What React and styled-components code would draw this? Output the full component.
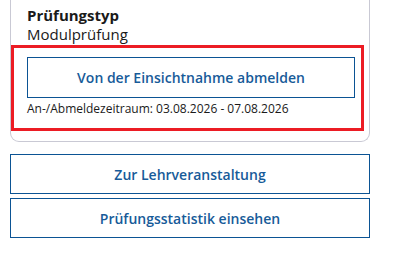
import styled, { createGlobalStyle } from 'styled-components';

const GlobalStyle = createGlobalStyle`
  body {
    margin: 0;
    background: #ffffff;
    font-family: "Open Sans", "Liberation Sans", sans-serif;
    color: #1a1a1a;
  }
`

const Page = styled.div`
  display: flex;
  flex-direction: column;
  width: 360px;
  margin-left: 10px;
`
const Card = styled.div`
  display: flex;
  flex-direction: column;
  border: 1px solid #c9c9d4;
  border-top: none;
  border-radius: 0 0 9px 9px;
  padding-bottom: 10px;
`
const Field = styled.div`
  display: flex;
  flex-direction: column;
  padding: 6px 16px 1px 16px;
`
const Label = styled.span`
  font-size: 15px;
  line-height: 19px;
  font-weight: 700;
  color: #1a1a1a;
`
const Value = styled.span`
  font-size: 15px;
  line-height: 19px;
  color: #1a1a1a;
`
const Highlight = styled.div`
  display: flex;
  flex-direction: column;
  margin-right: 5px;
  border: 3px solid #ec1c24;
  padding: 9px 6px 10px 13px;
`
const ActionButton = styled.button`
  display: flex;
  align-items: center;
  justify-content: center;
  height: ${(p) => p.height || 40}px;
  width: 100%;
  margin: 0;
  padding: 0;
  background: #ffffff;
  border: 1px solid #0b5394;
  color: #175b99;
  font-family: "Open Sans", "Liberation Sans", sans-serif;
  font-size: 14px;
  font-weight: 600;
  cursor: pointer;
`
const Period = styled.p`
  margin: 2px 0 0 0;
  font-size: 12px;
  line-height: 18px;
  color: #1a1a1a;
`
const Actions = styled.div`
  display: flex;
  flex-direction: column;
  gap: 4px;
  margin-top: 12px;
`

const App = () => {
  return (
    <>
      <GlobalStyle />
      <Page>
        <Card>
          <Field>
            <Label>Prüfungstyp</Label>
            <Value>Modulprüfung</Value>
          </Field>
          <Highlight>
            <ActionButton height={41}>Von der Einsichtnahme abmelden</ActionButton>
            <Period>An-/Abmeldezeitraum: 03.08.2026 - 07.08.2026</Period>
          </Highlight>
        </Card>
        <Actions>
          <ActionButton>Zur Lehrveranstaltung</ActionButton>
          <ActionButton>Prüfungsstatistik einsehen</ActionButton>
        </Actions>
      </Page>
    </>
  )
}

export default App
